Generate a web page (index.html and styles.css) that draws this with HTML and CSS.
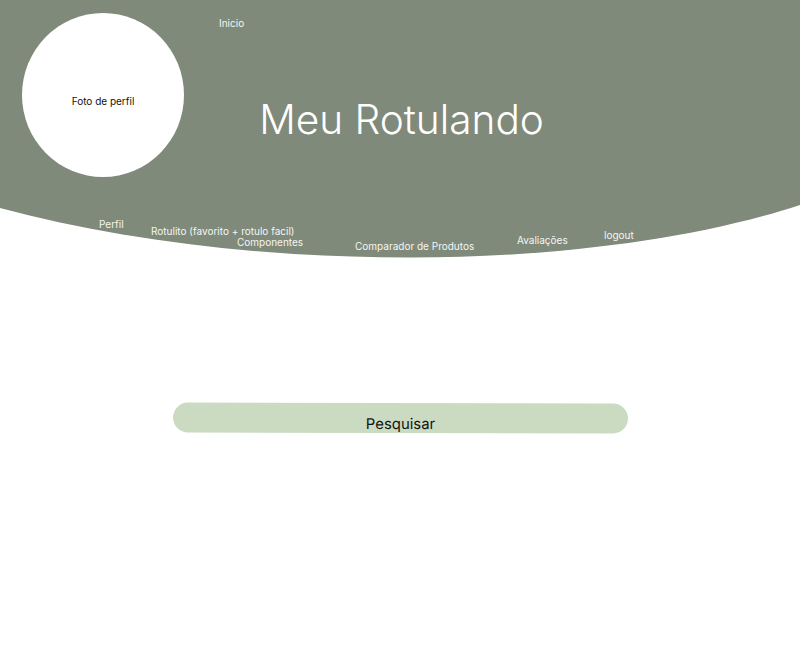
FILE: index.html
```html
<!DOCTYPE html>
<html lang="pt-BR">
<head>
<meta charset="utf-8">
<title>Meu Rotulando</title>
<link rel="stylesheet" href="styles.css">
</head>
<body>
<header class="hero">
  <div class="avatar"><span>Foto de perfil</span></div>
  <h1 class="title">Meu Rotulando</h1>
  <nav class="nav">
    <a class="nav-link nav-inicio" href="#">Inicio</a>
    <a class="nav-link nav-perfil" href="#">Perfil</a>
    <a class="nav-link nav-rotulito" href="#">Rotulito (favorito + rotulo facil)</a>
    <a class="nav-link nav-componentes" href="#">Componentes</a>
    <a class="nav-link nav-comparador" href="#">Comparador de Produtos</a>
    <a class="nav-link nav-avaliacoes" href="#">Avaliações</a>
    <a class="nav-link nav-logout" href="#">logout</a>
  </nav>
</header>
<main class="content">
  <button class="search">Pesquisar</button>
</main>
</body>
</html>
```
FILE: styles.css
```css
* { box-sizing: border-box; }
html, body { margin: 0; padding: 0; background: #ffffff; }
body { font-family: Inter, "Noto Sans", sans-serif; width: 800px; height: 657px; overflow: hidden; }

.hero {
  position: relative;
  height: 258px;
  background: #7f8a7a;
  display: grid;
  grid-template-columns: 1fr;
  grid-template-rows: auto;
  clip-path: path("M0 0 H800 V205 C700 238 560 257.5 410 257.5 C260 257.5 120 240 0 208 Z");
}

.avatar {
  grid-area: 1 / 1;
  justify-self: start;
  align-self: start;
  margin: 13px 0 0 22px;
  width: 162px;
  height: 164px;
  border-radius: 50%;
  background: #ffffff;
  display: flex;
  align-items: center;
  justify-content: center;
  padding-top: 12px;
  font-size: 10px;
  line-height: 12px;
  color: #111111;
}

.title {
  grid-area: 1 / 1;
  justify-self: center;
  align-self: start;
  margin: 96px 0 0 3px;
  font-size: 40.6px;
  line-height: 48px;
  font-weight: 300;
  color: #ffffff;
  letter-spacing: 0;
}

.nav-link {
  position: absolute;
  font-size: 10px;
  line-height: 12px;
  color: #f4f6f2;
  text-decoration: none;
  white-space: nowrap;
}
.nav-inicio { left: 219px; top: 17px; }
.nav-perfil { left: 99px; top: 218px; }
.nav-rotulito { left: 151px; top: 225px; }
.nav-componentes { left: 237px; top: 236px; }
.nav-comparador { left: 355px; top: 240px; }
.nav-avaliacoes { left: 517px; top: 234px; }
.nav-logout { left: 604px; top: 229px; }

.content {
  padding: 145px 0 0 173px;
}

.search {
  display: block;
  width: 455px;
  height: 30px;
  border: none;
  border-radius: 15px;
  background: #cbdbc1;
  font-family: Inter, "Noto Sans", sans-serif;
  font-size: 14.9px;
  line-height: 18px;
  color: #151515;
  padding: 12px 0 0 0;
  text-align: center;
  transform: rotate(0.13deg);
}
```
